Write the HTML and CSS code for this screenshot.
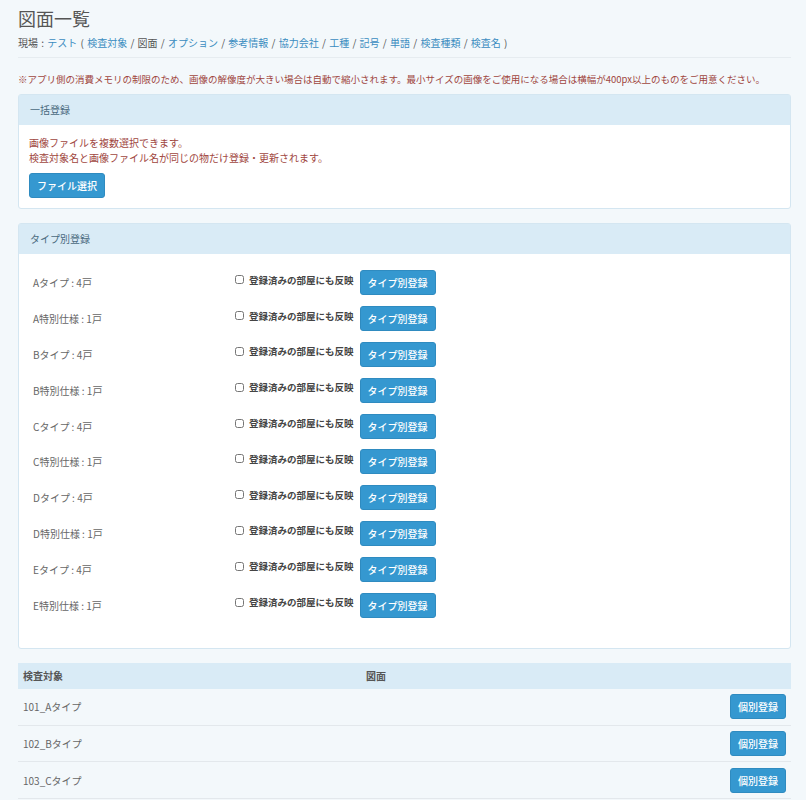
FILE: index.html
```html
<!DOCTYPE html>
<html lang="ja">
<head>
  <meta charset="UTF-8" />
  <title>図面一覧</title>
  <link rel="stylesheet" href="styles.css">
</head>
<body>
  <main class="page">
    <h1 class="page-title">図面一覧</h1>
    <div class="breadcrumb">
      現場 : <a href="#">テスト</a> ( <a href="#">検査対象</a> / 図面 / <a href="#">オプション</a> / <a href="#">参考情報</a> / <a href="#">協力会社</a> / <a href="#">工種</a> / <a href="#">記号</a> / <a href="#">単語</a> / <a href="#">検査種類</a> / <a href="#">検査名</a> )
    </div>

    <p class="notice">※アプリ側の消費メモリの制限のため、画像の解像度が大きい場合は自動で縮小されます。最小サイズの画像をご使用になる場合は横幅が400px以上のものをご用意ください。</p>

    <section class="panel">
      <div class="panel-heading">一括登録</div>
      <div class="panel-body">
        <p class="help">画像ファイルを複数選択できます。</p>
        <p class="help">検査対象名と画像ファイル名が同じの物だけ登録・更新されます。</p>
        <button class="btn btn-file">ファイル選択</button>
      </div>
    </section>

    <section class="panel">
      <div class="panel-heading">タイプ別登録</div>
      <div class="panel-body type-list" id="typeList"></div>
    </section>

    <table class="rooms">
      <thead>
        <tr><th class="col-name">検査対象</th><th>図面</th><th></th></tr>
      </thead>
      <tbody>
        <tr><td>101_Aタイプ</td><td></td><td class="col-action"><button class="btn">個別登録</button></td></tr>
        <tr><td>102_Bタイプ</td><td></td><td class="col-action"><button class="btn">個別登録</button></td></tr>
        <tr><td>103_Cタイプ</td><td></td><td class="col-action"><button class="btn">個別登録</button></td></tr>
      </tbody>
    </table>
  </main>

  <script>
    const types = [
      'Aタイプ : 4戸', 'A特別仕様 : 1戸',
      'Bタイプ : 4戸', 'B特別仕様 : 1戸',
      'Cタイプ : 4戸', 'C特別仕様 : 1戸',
      'Dタイプ : 4戸', 'D特別仕様 : 1戸',
      'Eタイプ : 4戸', 'E特別仕様 : 1戸'
    ];
    const list = document.getElementById('typeList');
    types.forEach((t) => {
      const row = document.createElement('div');
      row.className = 'type-row';
      row.innerHTML =
        '<span class="type-name">' + t + '</span>' +
        '<label class="reflect"><input type="checkbox"> 登録済みの部屋にも反映</label>' +
        '<button class="btn">タイプ別登録</button>';
      list.appendChild(row);
    });
  </script>
</body>
</html>
```

FILE: styles.css
```css
* {
  margin: 0;
  padding: 0;
  box-sizing: border-box;
}

body {
  font-family: 'Noto Sans CJK JP', 'Noto Sans', sans-serif;
  font-size: 10px;
  color: #555;
  background: #f3f8fb;
}

.page {
  padding: 6px 15px 0 18px;
}

.page-title {
  font-size: 18px;
  font-weight: 400;
  color: #555;
  line-height: 24px;
}

.breadcrumb {
  margin-top: 6px;
  padding-bottom: 7px;
  border-bottom: 1px solid #e6ecf0;
  line-height: 14px;
  word-spacing: 1px;
}

.breadcrumb a {
  color: #3a8cc0;
  text-decoration: none;
}

.notice {
  margin: 14px 0 8px;
  font-size: 9.5px;
  color: #a0463e;
  line-height: 14px;
}

.panel {
  background: #fff;
  border: 1px solid #d4e6f1;
  border-radius: 3px;
  margin-bottom: 14px;
}

.panel-heading {
  background: #d9ebf6;
  height: 30px;
  line-height: 30px;
  padding: 0 11px;
  color: #4a6a7e;
}

.panel-body {
  padding: 10px 10px 10px;
}

.help {
  color: #a0463e;
  line-height: 15px;
}

.btn {
  background: #3598d0;
  color: #fff;
  border: 1px solid #2f8bc0;
  border-radius: 3px;
  font-family: inherit;
  font-size: 10px;
  font-weight: 500;
  padding: 0 7px;
  height: 25px;
  cursor: pointer;
}

.btn-file {
  margin-top: 8px;
}

.type-list {
  padding: 11px 14px 25px;
}

.type-row {
  display: flex;
  align-items: center;
  height: 35.8px;
}

.type-name {
  width: 202px;
  color: #666;
}

.reflect {
  display: flex;
  align-items: center;
  gap: 5px;
  font-size: 9.5px;
  font-weight: 700;
  color: #444;
  margin-right: 6px;
  position: relative;
  top: -3px;
}

.reflect input {
  width: 9px;
  height: 9px;
  margin: 0;
}

.rooms {
  width: 100%;
  border-collapse: collapse;
  margin-top: 1px;
}

.rooms th {
  background: #d9ebf6;
  text-align: left;
  font-weight: 700;
  color: #555;
  height: 26px;
  padding: 0 5px;
}

.rooms th.col-name {
  width: 343px;
}

.rooms td {
  height: 36.5px;
  padding: 0 5px;
  border-bottom: 1px solid #e3e8ec;
  color: #666;
}

.rooms .col-action {
  text-align: right;
}
```
